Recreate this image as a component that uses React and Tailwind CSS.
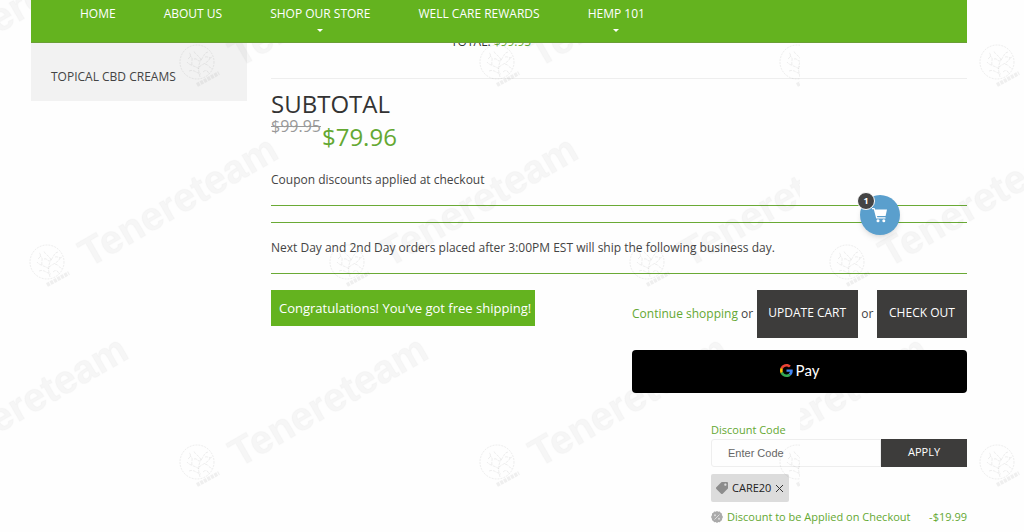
import { useState } from "react";
import { FaTag } from "react-icons/fa";

const navItems = [
  { label: "HOME" },
  { label: "ABOUT US" },
  { label: "SHOP OUR STORE", menu: true },
  { label: "WELL CARE REWARDS" },
  { label: "HEMP 101", menu: true },
];

// staggered rows, 200px apart
const marks = [
  [-100, 65],
  [200, 65],
  [500, 65],
  [800, 65],
  [50, 265],
  [350, 265],
  [650, 265],
  [-100, 465],
  [200, 465],
  [500, 465],
  [800, 465],
];

function Navbar() {
  return (
    <nav className="relative z-10 flex h-[43px] border-b border-[#6a9f35] bg-[#64b31f] pl-[25px] text-white">
      {navItems.map((item) => (
        <a
          key={item.label}
          href="#"
          className="flex flex-col items-center px-6 pt-1 text-[12px] leading-5"
        >
          {item.label}
          {item.menu && (
            <span className="mt-[5px] border-x-3 border-t-3 border-x-transparent border-t-white" />
          )}
        </a>
      ))}
    </nav>
  );
}

function Watermark() {
  return (
    <svg
      aria-hidden="true"
      className="pointer-events-none absolute inset-0 h-full w-full"
    >
      <defs>
        <g id="mark" fill="none" stroke="#000" strokeOpacity="0.06">
          <circle r="17" cx="-3" cy="-3" strokeDasharray="2 1" />
          <path
            strokeDasharray="3 1"
            d="M0 12C-2 5-2 0 1-5M-1 4C-6 0-10 1-13-3M-1 2C4-2 8-2 10-7M1-5C-1-10-5-10-6-14M1-5C4-9 4-12 8-13M-8 0C-9-5-6-7-10-9M5-1C9 0 10 3 12 4M-11 6C-6 4-4 8 1 9M3 7C6 4 8 6 9 9M-6-6C-3-7-3-4 0-4M5-8C8-9 10-6 12-8M-12-6C-9-8-9-12-11-12"
          />
          <path strokeWidth="4" strokeDasharray="3 1" d="M-3 20L19 8" />
          <text
            transform="translate(39 3) rotate(-30)"
            className="text-[40px] font-bold"
            fontFamily="Liberation Sans, Arial, sans-serif"
            fill="#000"
            fillOpacity="0.03"
            stroke="#000"
            strokeOpacity="0.01"
          >
            Tenereteam
          </text>
        </g>
        <pattern id="marks" width="800" height="532" patternUnits="userSpaceOnUse">
          {marks.map(([x, y]) => (
            <use key={`${x}-${y}`} href="#mark" x={x} y={y} />
          ))}
        </pattern>
      </defs>
      <rect width="100%" height="100%" fill="url(#marks)" />
    </svg>
  );
}

function GoogleLogo() {
  return (
    <svg viewBox="0 0 48 48" className="size-[13px]">
      <path fill="#EA4335" d="M24 9.5c3.54 0 6.71 1.22 9.21 3.6l6.85-6.85C35.9 2.38 30.47 0 24 0 14.62 0 6.51 5.38 2.56 13.22l7.98 6.19C12.43 13.72 17.74 9.5 24 9.5z" />
      <path fill="#4285F4" d="M46.98 24.55c0-1.57-.15-3.09-.38-4.55H24v9.02h12.94c-.58 2.96-2.26 5.48-4.78 7.18l7.73 6c4.51-4.18 7.09-10.36 7.09-17.65z" />
      <path fill="#FBBC05" d="M10.53 28.59c-.48-1.45-.76-2.99-.76-4.59s.27-3.14.76-4.59l-7.98-6.19C.92 16.46 0 20.12 0 24c0 3.88.92 7.54 2.56 10.78l7.97-6.19z" />
      <path fill="#34A853" d="M24 48c6.48 0 11.93-2.13 15.89-5.81l-7.73-6c-2.15 1.45-4.92 2.3-8.16 2.3-6.26 0-11.57-4.22-13.47-9.91l-7.98 6.19C6.51 42.62 14.62 48 24 48z" />
    </svg>
  );
}

function DiscountForm() {
  const [code, setCode] = useState("");
  const [applied, setApplied] = useState(true);

  return (
    <div className="mt-7 ml-auto w-[256px] text-[11px] leading-[18px]">
      <label htmlFor="code" className="block text-[#64a832]">
        Discount Code
      </label>
      <div className="flex h-7">
        <input
          id="code"
          value={code}
          onChange={(e) => setCode(e.target.value)}
          placeholder="Enter Code"
          className="min-w-0 flex-1 rounded-l-[3px] border border-[#eee] px-4 font-['Liberation_Sans',Arial,sans-serif] text-[11px] placeholder:text-[#666]"
        />
        <button className="w-[86px] bg-[#3d3c3b] pb-[2px] text-white">
          APPLY
        </button>
      </div>
      {applied && (
        <div className="mt-[7px] inline-flex h-7 items-center rounded-[2px] bg-[#dcdcdc] px-[5px] text-[#222]">
          <FaTag className="mr-1 size-3 -scale-x-100 text-[#8c8c8c]" />
          CARE20
          <button
            aria-label="Remove code"
            onClick={() => setApplied(false)}
            className="ml-1"
          >
            <svg viewBox="0 0 9 9" className="size-[9px]" stroke="#333">
              <path d="M1 1l7 7M8 1L1 8" />
            </svg>
          </button>
        </div>
      )}
      <div className="mt-[6px] flex items-center text-[#64a832]">
        <svg viewBox="0 0 12 12" className="mr-1 size-3">
          <path
            fill="#aaa"
            d="M6 0l1.3.7 1.5-.1.8 1.2 1.3.7V4L12 6l-.9 1.7-.1 1.5-1.3.8-.8 1.2-1.5-.1L6 12l-1.4-.9-1.5.1-.8-1.2-1.3-.8-.1-1.5L0 6l1-2V2.5l1.3-.7.8-1.2 1.5.1z"
          />
          <path stroke="#ddd" d="M3.5 8.5l5-5" />
          <circle cx="4" cy="4.2" r="1" fill="#ddd" />
          <circle cx="8" cy="7.8" r="1" fill="#ddd" />
        </svg>
        <span>Discount to be Applied on Checkout</span>
        <span className="ml-auto">-$19.99</span>
      </div>
    </div>
  );
}

function CartBubble() {
  return (
    <button
      aria-label="Cart"
      className="absolute top-[195px] right-[124px] z-10 flex size-10 items-center justify-center rounded-full bg-[#5a9fcd] text-white shadow-md"
    >
      <svg viewBox="0 0 16 16" className="size-4" fill="#fff">
        <path d="M0 1h2.6l.5 1.6H15L13.6 9H5l.3 1.2h8.2v1.2H4.2L1.8 2.2H0z" />
        <circle cx="6" cy="13.7" r="1.5" />
        <circle cx="11.8" cy="13.7" r="1.5" />
      </svg>
      <span className="absolute -top-[3px] -left-[3px] flex size-[18px] items-center justify-center rounded-full border border-white bg-[#444] text-[9px] font-bold">
        1
      </span>
    </button>
  );
}

export default function App() {
  return (
    <div className="relative min-h-screen overflow-hidden bg-[#fefefe] pr-[57px] pl-[31px] font-['Open_Sans',sans-serif] text-[12px] leading-5 text-[#444]">
      <Navbar />

      <div className="flex items-start gap-6">
        {/* Sidebar */}
        <aside className="w-[216px] shrink-0 bg-[#f2f2f2] px-5 pt-6 pb-[14px]">
          <a href="#">TOPICAL CBD CREAMS</a>
        </aside>

        {/* Cart */}
        <main className="min-w-0 flex-1">
          <p className="-mt-[9px] pl-[180px] leading-4 text-[#333]">
            TOTAL: <span className="text-[#64a832]">$99.95</span>
          </p>
          <hr className="mt-7 border-[#eee]" />

          <h2 className="mt-[11px] text-[24px] leading-7 text-[#333]">
            SUBTOTAL
          </h2>
          <div className="flex items-start gap-px">
            <s className="text-[16px] leading-4 text-[#999]">$99.95</s>
            <span className="mt-[3px] text-[24px] leading-8 text-[#64a832]">
              $79.96
            </span>
          </div>

          <p className="mt-[17px]">Coupon discounts applied at checkout</p>
          <hr className="mt-[15px] border-[#6aaa35]" />
          <hr className="mt-4 border-[#6aaa35]" />
          <p className="mt-[15px]">
            Next Day and 2nd Day orders placed after 3:00PM EST will ship the
            following business day.
          </p>
          <hr className="mt-[15px] border-[#6aaa35]" />

          <div className="mt-4 flex items-start justify-between">
            <p className="bg-[#64b31f] py-2 pr-1 pl-2 text-[13px] text-white">
              Congratulations! You've got free shipping!
            </p>

            <div className="w-[335px]">
              <div className="flex items-center justify-between">
                <span>
                  <a href="#" className="text-[#64a832]">
                    Continue shopping
                  </a>{" "}
                  or
                </span>
                <button className="h-12 w-[101px] bg-[#3d3c3b] pb-[2px] text-white">
                  UPDATE CART
                </button>
                <span>or</span>
                <button className="h-12 w-[90px] bg-[#3d3c3b] pb-[2px] text-white">
                  CHECK OUT
                </button>
              </div>

              <button
                aria-label="Google Pay"
                className="mt-3 flex h-[43px] w-full items-center justify-center gap-[3px] rounded bg-black pb-[3px] font-['Lato',sans-serif] text-[15px] text-white"
              >
                <GoogleLogo />
                Pay
              </button>

              <DiscountForm />
            </div>
          </div>
        </main>
      </div>

      <CartBubble />
      <Watermark />
    </div>
  );
}
